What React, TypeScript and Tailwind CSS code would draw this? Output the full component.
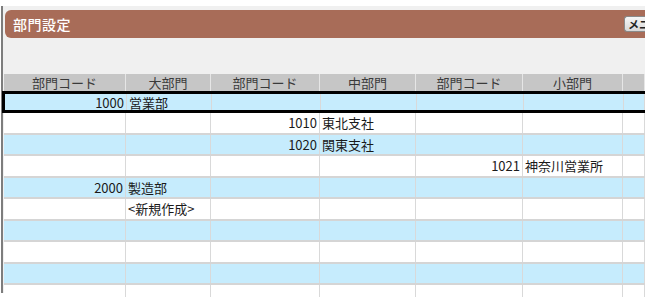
import type { ReactNode } from 'react'

type Row = {
  c1?: string
  n1?: string
  c2?: string
  n2?: string
  c3?: string
  n3?: string
}

const rows: Row[] = [
  { c1: '1000', n1: '営業部' },
  { c2: '1010', n2: '東北支社' },
  { c2: '1020', n2: '関東支社' },
  { c3: '1021', n3: '神奈川営業所' },
  { c1: '2000', n1: '製造部' },
  { n1: '<新規作成>' },
  {},
  {},
  {},
  {},
]

const headers = ['部門コード', '大部門', '部門コード', '中部門', '部門コード', '小部門', '']

const cols = 'grid grid-cols-[122px_85px_109px_96px_107px_100px_1fr]'

function Cell({ children, right }: { children?: ReactNode; right?: boolean }) {
  return (
    <div
      className={`flex items-center whitespace-nowrap border-r border-[#d9d9d9] px-[2px] leading-none ${
        right ? 'justify-end' : 'justify-start'
      }`}
    >
      {children}
    </div>
  )
}

export default function App() {
  return (
    <div
      className="relative h-[297px] w-[645px] overflow-hidden bg-white text-[13px] text-[#1a1a1a]"
      style={{ fontFamily: '"Noto Sans CJK JP", "Noto Sans", sans-serif' }}
    >
      <div className="ml-[1px] mt-[6px] h-[287px] border-l-2 border-[#7d7d7d] bg-[#f0f0f0] pt-[4px]">
        {/* title bar */}
        <div className="ml-[2px] flex h-[28px] items-center justify-between rounded-l-[6px] bg-[#a86c58] pl-[8px]">
          <span className="text-[14px] font-medium tracking-[0.5px] text-white">部門設定</span>
          <div className="flex h-[16px] w-[21px] items-center overflow-hidden whitespace-nowrap rounded-l-[3px] border border-r-0 border-[#8a8a8a] bg-gradient-to-b from-[#f6f6f6] to-[#d8d8d8] pl-[3px] text-[11px] font-bold leading-none text-[#222]">
            メニュー
          </div>
        </div>

        <div className="h-[36px]" />

        {/* header */}
        <div className={`${cols} ml-[1px] h-[17px] bg-[#c6c6c6] text-[#3a3a3a]`}>
          {headers.map((h, i) => (
            <div
              key={i}
              className="flex items-center justify-center whitespace-nowrap border-r border-[#e6e6e6] text-[13px] leading-none"
            >
              {h}
            </div>
          ))}
        </div>

        {/* rows */}
        {rows.map((r, i) => {
          const bg = i % 2 === 0 ? 'bg-[#c6ecfd]' : 'bg-white'
          const sel = i === 0
          return (
            <div
              key={i}
              className={`${cols} ${bg} ${
                sel
                  ? '-ml-[1px] h-[22px] border-[3px] border-r-0 border-black'
                  : 'ml-[1px] h-[21.5px] border-b-2 border-[#d5d5d5]'
              }`}
            >
              <Cell right>{r.c1}</Cell>
              <Cell>{r.n1}</Cell>
              <Cell right>{r.c2}</Cell>
              <Cell>{r.n2}</Cell>
              <Cell right>{r.c3}</Cell>
              <Cell>{r.n3}</Cell>
              <Cell />
            </div>
          )
        })}
      </div>
    </div>
  )
}
